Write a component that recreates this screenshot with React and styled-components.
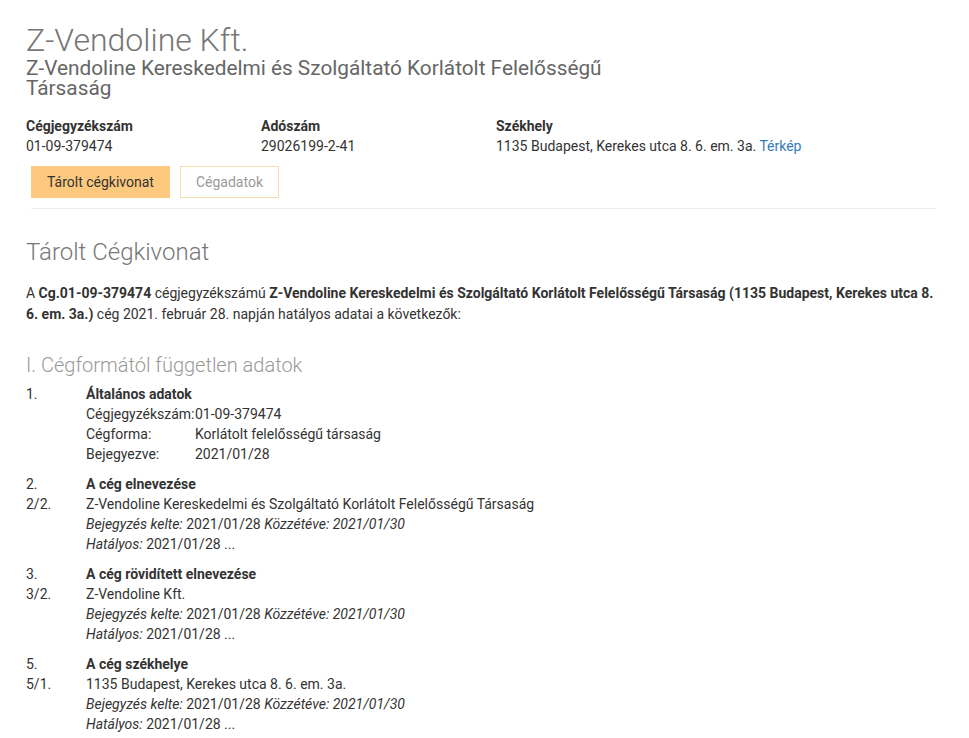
import React from 'react';
import styled, { createGlobalStyle } from 'styled-components';

const GlobalStyle = createGlobalStyle`
  body {
    margin: 0;
    background: #fff;
    font-family: Roboto, "Liberation Sans", Arial, sans-serif;
    font-size: 14px;
    color: #333;
  }
`;

const Page = styled.div`
  width: 910px;
  margin-left: 26px;
  padding-top: 22px;
`;

const Title = styled.h1`
  margin: 0;
  font-size: 32px;
  font-weight: 300;
  line-height: 36px;
  color: #777;
`;

const Subtitle = styled.h2`
  margin: 0;
  max-width: 600px;
  font-size: 20.8px;
  font-weight: 400;
  line-height: 20px;
  color: #666;
`;

const InfoGrid = styled.div`
  display: grid;
  grid-template-columns: 235px 235px 1fr;
  margin-top: 18px;
  line-height: 20px;
`;

const InfoLabel = styled.div`
  font-weight: 700;
`;

const Link = styled.a`
  color: #337ab7;
  text-decoration: none;
`;

const Tabs = styled.div`
  display: flex;
  gap: 10px;
  margin: 10px 0 0 5px;
  padding-bottom: 10px;
  border-bottom: 1px solid #eee;
`;

const Tab = styled.button`
  font-family: inherit;
  font-size: 14px;
  height: 32px;
  padding: 0 15px;
  border: 1px solid ${p => (p.$active ? '#fcc97f' : '#f3dcae')};
  background: ${p => (p.$active ? '#fcc97f' : '#fff')};
  color: ${p => (p.$active ? '#333' : '#999')};
  cursor: pointer;
`;

const SectionTitle = styled.h3`
  margin: 28px 0 0;
  font-size: 24px;
  font-weight: 300;
  line-height: 30px;
  color: #777;
`;

const Intro = styled.p`
  margin: 16px 0 0;
  line-height: 21px;
`;

const GroupTitle = styled.h4`
  margin: 28px 0 0;
  font-size: 20px;
  font-weight: 300;
  line-height: 24px;
  color: #999;
`;

const Entries = styled.div`
  margin-top: 7px;
`;

const Entry = styled.div`
  display: grid;
  grid-template-columns: 60px 1fr;
  line-height: 20px;
  & + & {
    margin-top: 10px;
  }
`;

const Num = styled.div``;

const Heading = styled.div`
  font-weight: 700;
`;

const Fields = styled.div`
  display: grid;
  grid-template-columns: 109px 1fr;
`;

const Meta = styled.div`
  i {
    font-style: italic;
  }
`;

const entries = [
  {
    num: '2.',
    sub: '2/2.',
    title: 'A cég elnevezése',
    value: 'Z-Vendoline Kereskedelmi és Szolgáltató Korlátolt Felelősségű Társaság',
  },
  {
    num: '3.',
    sub: '3/2.',
    title: 'A cég rövidített elnevezése',
    value: 'Z-Vendoline Kft.',
  },
  {
    num: '5.',
    sub: '5/1.',
    title: 'A cég székhelye',
    value: '1135 Budapest, Kerekes utca 8. 6. em. 3a.',
  },
];

export default function App() {
  return (
    <>
      <GlobalStyle />
      <Page>
        <Title>Z-Vendoline Kft.</Title>
        <Subtitle>Z-Vendoline Kereskedelmi és Szolgáltató Korlátolt Felelősségű Társaság</Subtitle>

        <InfoGrid>
          <div>
            <InfoLabel>Cégjegyzékszám</InfoLabel>
            <div>01-09-379474</div>
          </div>
          <div>
            <InfoLabel>Adószám</InfoLabel>
            <div>29026199-2-41</div>
          </div>
          <div>
            <InfoLabel>Székhely</InfoLabel>
            <div>
              1135 Budapest, Kerekes utca 8. 6. em. 3a. <Link href="#">Térkép</Link>
            </div>
          </div>
        </InfoGrid>

        <Tabs>
          <Tab $active>Tárolt cégkivonat</Tab>
          <Tab>Cégadatok</Tab>
        </Tabs>

        <SectionTitle>Tárolt Cégkivonat</SectionTitle>
        <Intro>
          A <b>Cg.01-09-379474</b> cégjegyzékszámú{' '}
          <b>Z-Vendoline Kereskedelmi és Szolgáltató Korlátolt Felelősségű Társaság (1135 Budapest, Kerekes utca 8. 6. em. 3a.)</b>{' '}
          cég 2021. február 28. napján hatályos adatai a következők:
        </Intro>

        <GroupTitle>I. Cégformától független adatok</GroupTitle>
        <Entries>
          <Entry>
            <Num>1.</Num>
            <div>
              <Heading>Általános adatok</Heading>
              <Fields>
                <span>Cégjegyzékszám:</span>
                <span>01-09-379474</span>
                <span>Cégforma:</span>
                <span>Korlátolt felelősségű társaság</span>
                <span>Bejegyezve:</span>
                <span>2021/01/28</span>
              </Fields>
            </div>
          </Entry>
          {entries.map(e => (
            <Entry key={e.num}>
              <Num>
                {e.num}
                <br />
                {e.sub}
              </Num>
              <div>
                <Heading>{e.title}</Heading>
                <div>{e.value}</div>
                <Meta>
                  <i>Bejegyzés kelte:</i> 2021/01/28 <i>Közzétéve: 2021/01/30</i>
                </Meta>
                <Meta>
                  <i>Hatályos:</i> 2021/01/28 ...
                </Meta>
              </div>
            </Entry>
          ))}
        </Entries>
      </Page>
    </>
  );
}
